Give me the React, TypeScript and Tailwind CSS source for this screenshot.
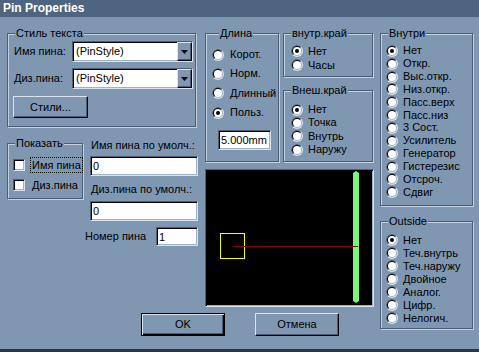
import React from "react";

const sunken =
  "border border-t-[#4b5e75] border-l-[#4b5e75] border-r-[#dbe4ee] border-b-[#dbe4ee] shadow-[inset_1px_1px_0_#000,inset_-1px_-1px_0_#9fb2c6]";
const raised =
  "border border-t-[#dbe4ee] border-l-[#dbe4ee] border-r-black border-b-black shadow-[inset_-1px_-1px_0_#4b5e75]";

const Group = ({
  legend,
  legendLeft = "left-[6px]",
  className,
  children,
}: {
  legend: string;
  legendLeft?: string;
  className: string;
  children?: React.ReactNode;
}) => (
  <div
    className={`relative border border-[#4b5e75] shadow-[inset_1px_1px_0_#c3d1df,1px_1px_0_#c3d1df] ${className}`}
  >
    <span className={`absolute -top-[8px] ${legendLeft} px-[1px] bg-[#7f97b1] leading-[14px] whitespace-nowrap`}>
      {legend}
    </span>
    {children}
  </div>
);

const Radio = ({ checked = false }: { checked?: boolean }) => (
  <svg width="12" height="12" viewBox="0 0 12 12" className="shrink-0">
    <circle cx="6" cy="6" r="6" fill="#dbe4ee" />
    <path d="M1.757 10.243 A6 6 0 0 1 10.243 1.757 Z" fill="#4b5e75" />
    <circle cx="6" cy="6" r="5" fill="#9fb2c6" />
    <path d="M2.464 9.536 A5 5 0 0 1 9.536 2.464 Z" fill="#000" />
    <circle cx="6" cy="6" r="4" fill="#fff" />
    {checked && <circle cx="6" cy="6" r="2" fill="#000" />}
  </svg>
);

const RadioRow = ({
  label,
  checked,
  h,
  gap = "gap-[5px]",
}: {
  label: string;
  checked?: boolean;
  h: string;
  gap?: string;
}) => (
  <div className={`flex items-center ${gap} ${h} whitespace-nowrap`}>
    <Radio checked={checked} />
    <span className="leading-[13px]">{label}</span>
  </div>
);

const Select = ({ value }: { value: string }) => (
  <div className={`flex w-[121px] h-[21px] bg-white ${sunken}`}>
    <span className="flex-1 pl-[3px] pt-[1px] leading-[17px]">{value}</span>
    <div className={`w-[15px] h-full bg-[#7f97b1] flex items-center justify-center ${raised}`}>
      <svg width="7" height="4" viewBox="0 0 7 4">
        <path d="M0 0 H7 L3.5 4 Z" fill="#000" />
      </svg>
    </div>
  </div>
);

const Input = ({ value, className }: { value: string; className: string }) => (
  <div className={`bg-white pl-[2px] flex items-center ${sunken} ${className}`}>
    <span className="leading-[14px]">{value}</span>
  </div>
);

const Checkbox = () => <div className={`w-[12px] h-[12px] bg-white shrink-0 ${sunken}`} />;

const inner = ["Нет", "Откр.", "Выс.откр.", "Низ.откр.", "Пасс.верх", "Пасс.низ", "3 Сост.", "Усилитель", "Генератор", "Гистерезис", "Отсроч.", "Сдвиг"];
const outside = ["Нет", "Теч.внутрь", "Теч.наружу", "Двойное", "Аналог.", "Цифр.", "Нелогич."];

export default function App() {
  return (
    <div className="w-[479px] h-[352px] bg-[#7f97b1] flex flex-col overflow-hidden border-b-[3px] border-[#2b3644] font-['Liberation_Sans',Arial,sans-serif] text-[11px] text-black">
      <div className="h-[17px] shrink-0 bg-[#4e6582] text-white font-bold text-[12px] leading-[17px] pl-[3px]">
        Pin Properties
      </div>

      <div className="flex flex-1 pl-[7px]">
        {/* left + middle */}
        <div className="flex flex-col w-[367px]">
          <div className="flex">
            {/* left column */}
            <div className="flex flex-col w-[191px] pt-[16px]">
              <Group legend="Стиль текста" legendLeft="left-[7px]" className="w-[189px] h-[94px] pt-[7px] pl-[6px]">
                <div className="flex items-center">
                  <span className="w-[58px] whitespace-nowrap">Имя пина:</span>
                  <Select value="(PinStyle)" />
                </div>
                <div className="flex items-center mt-[6px]">
                  <span className="w-[58px] whitespace-nowrap">Диз.пина:</span>
                  <Select value="(PinStyle)" />
                </div>
                <button className={`mt-[7px] -ml-[1px] w-[75px] h-[22px] bg-[#7f97b1] ${raised}`}>Стили...</button>
              </Group>

              <div className="flex mt-[10px]">
                <Group legend="Показать" legendLeft="left-[7px]" className="mt-[6px] w-[76px] h-[56px] pt-[13px] pl-[5px]">
                  <div className="flex items-center h-[16px] whitespace-nowrap">
                    <Checkbox />
                    <span className="ml-[5px] h-[16px] px-[1px] leading-[14px] border border-dotted border-black">Имя пина</span>
                  </div>
                  <div className="flex items-center h-[16px] mt-[4px] whitespace-nowrap">
                    <Checkbox />
                    <span className="ml-[7px] leading-[14px]">Диз.пина</span>
                  </div>
                </Group>

                <div className="flex flex-col ml-[7px] w-[108px] pt-[1px]">
                  <span className="pl-[1px] leading-[14px] whitespace-nowrap">Имя пина по умолч.:</span>
                  <Input value="0" className="mt-[4px] h-[20px] w-[108px]" />
                  <span className="mt-[6px] pl-[1px] leading-[14px] whitespace-nowrap">Диз.пина по умолч.:</span>
                  <Input value="0" className="mt-[5px] h-[20px] w-[108px]" />
                  <div className="flex items-center mt-[6px] -ml-[5px]">
                    <span className="w-[71px] whitespace-nowrap">Номер пина</span>
                    <Input value="1" className="h-[19px] w-[42px]" />
                  </div>
                </div>
              </div>
            </div>

            {/* middle column */}
            <div className="flex flex-col ml-[7px] w-[169px] pt-[16px]">
              <div className="flex">
                <Group legend="Длина" legendLeft="left-[13px]" className="w-[74px] h-[129px] pt-[11px] pl-[6px]">
                  <RadioRow label="Корот." h="h-[19.33px]" gap="gap-[6px]" />
                  <RadioRow label="Норм." h="h-[19.33px]" gap="gap-[6px]" />
                  <RadioRow label="Длинный" h="h-[19.33px]" gap="gap-[6px]" />
                  <RadioRow label="Польз." checked h="h-[19.33px]" gap="gap-[6px]" />
                  <Input value="5.000mm" className="mt-[8px] ml-[6px] h-[20px] w-[53px]" />
                </Group>

                <div className="flex flex-col ml-[4px]">
                  <Group legend="внутр.край" legendLeft="left-[7px]" className="w-[90px] h-[44px] pt-[10px] pl-[7px]">
                    <RadioRow label="Нет" checked h="h-[14px]" />
                    <RadioRow label="Часы" h="h-[14px]" />
                  </Group>
                  <Group legend="Внеш.край" legendLeft="left-[7px]" className="mt-[13px] w-[90px] h-[72px] pt-[12px] pl-[7px]">
                    <RadioRow label="Нет" checked h="h-[13.33px]" />
                    <RadioRow label="Точка" h="h-[13.33px]" />
                    <RadioRow label="Внутрь" h="h-[13.33px]" />
                    <RadioRow label="Наружу" h="h-[13.33px]" />
                  </Group>
                </div>
              </div>

              <div className={`mt-[7px] w-[169px] h-[138px] bg-black ${sunken}`}>
                <svg width="165" height="134" viewBox="0 0 165 134" className="block">
                  <path d="M147 3 L150 1 L153 3 V131 L150 133 L147 131 Z" fill="#78f77b" />
                  <rect x="14.5" y="63.5" width="24" height="25" fill="none" stroke="#ffff00" strokeWidth="1" />
                  <line x1="27" y1="76.5" x2="152" y2="76.5" stroke="#8b0000" strokeWidth="1" />
                </svg>
              </div>
            </div>
          </div>

          <div className="flex mt-[6px] pl-[134px]">
            <button className="w-[84px] h-[23px] bg-[#7f97b1] border border-black shadow-[inset_1px_1px_0_#dbe4ee,inset_-1px_-1px_0_#000,inset_-2px_-2px_0_#4b5e75]">
              OK
            </button>
            <button className={`ml-[30px] w-[84px] h-[23px] bg-[#7f97b1] ${raised}`}>Отмена</button>
          </div>
        </div>

        {/* right column */}
        <div className="flex flex-col ml-[6px] pt-[16px]">
          <Group legend="Внутри" legendLeft="left-[7px]" className="w-[93px] h-[173px] pt-[10.5px] pl-[5px]">
            {inner.map((t, i) => (
              <RadioRow key={t} label={t} checked={i === 0} h="h-[12.85px]" />
            ))}
          </Group>
          <Group legend="Outside" legendLeft="left-[7px]" className="mt-[15px] w-[93px] h-[108px] pt-[11.5px] pl-[5px]">
            {outside.map((t, i) => (
              <RadioRow key={t} label={t} checked={i === 0} h="h-[13px]" />
            ))}
          </Group>
        </div>
      </div>
    </div>
  );
}
